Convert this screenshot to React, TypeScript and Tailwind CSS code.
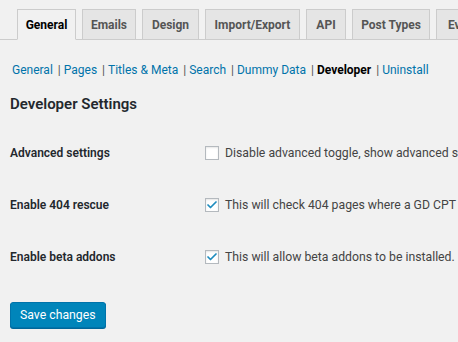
import { Check } from 'lucide-react';

const tabs = [
	{ name: 'General', width: 'w-[59px]' },
	{ name: 'Emails', width: 'w-[54px]' },
	{ name: 'Design', width: 'w-[57px]' },
	{ name: 'Import/Export', width: 'w-[95px]' },
	{ name: 'API', width: 'w-[40px]' },
	{ name: 'Post Types', width: 'w-[78px]' },
	{ name: 'Events', width: 'w-[60px]' },
];

const subLinks = ['General', 'Pages', 'Titles & Meta', 'Search', 'Dummy Data', 'Developer', 'Uninstall'];

const rows = [
	{ label: 'Advanced settings', text: 'Disable advanced toggle, show advanced settings at all times (not recommended).', checked: false },
	{ label: 'Enable 404 rescue', text: 'This will check 404 pages where a GD CPT is in the url and try to redirect.', checked: true },
	{ label: 'Enable beta addons', text: 'This will allow beta addons to be installed.', checked: true },
];

const App = () => {
	return (
		<div
			className="w-[458px] h-[342px] overflow-hidden bg-[#f1f1f1] text-[#444]"
			style={{ fontFamily: 'Roboto, "Liberation Sans", sans-serif' }}
		>
			<div className="flex pl-[11px] pt-[9px] border-b border-b-[#ccc] whitespace-nowrap">
				{tabs.map((tab, index) => (
					<div
						key={tab.name}
						className={`ml-[6px] shrink-0 ${tab.width} h-[31px] -mb-px flex items-center justify-center border border-[#ccc] text-[12px] font-bold ${
							index === 0
								? 'bg-[#f1f1f1] border-b-[#f1f1f1] text-black'
								: 'bg-[#e5e5e5] text-[#555]'
						}`}
					>
						{tab.name}
					</div>
				))}
			</div>

			<div className="flex pl-[12px] mt-[20px] h-[20px] items-center text-[12px] whitespace-nowrap">
				{subLinks.map((link, index) => (
					<span key={link} className="flex items-center">
						{index > 0 && <span className="text-[#555] ml-[5px] mr-[3px]">|</span>}
						<span className={link === 'Developer' ? 'text-black font-bold' : 'text-[#0073aa]'}>{link}</span>
					</span>
				))}
			</div>

			<h2 className="pl-[10px] mt-[14px] text-[15px] font-semibold text-[#23282d] leading-[20px]">
				Developer Settings
			</h2>

			<div className="flex flex-col mt-[13px]">
				{rows.map((row) => (
					<div key={row.label} className="flex items-center h-[52px] whitespace-nowrap">
						<div className="w-[205px] shrink-0 pl-[10px] text-[12px] font-semibold text-[#23282d]">
							{row.label}
						</div>
						<div className="flex items-center">
							<span className="w-[14px] h-[14px] shrink-0 border border-[#b4b9be] bg-white flex items-center justify-center shadow-[inset_0_1px_2px_rgba(0,0,0,0.1)]">
								{row.checked && <Check className="w-[12px] h-[12px] text-[#1e8cbe]" strokeWidth={3.5} />}
							</span>
							<span className="ml-[6px] text-[12.25px] text-[#444]">{row.text}</span>
						</div>
					</div>
				))}
			</div>

			<button className="ml-[10px] mt-[19px] h-[26px] px-[9px] rounded-[3px] bg-[#0085ba] border border-[#0073aa] shadow-[0_1px_0_#006799] text-white text-[12.25px]">
				Save changes
			</button>
		</div>
	);
};

export default App;
